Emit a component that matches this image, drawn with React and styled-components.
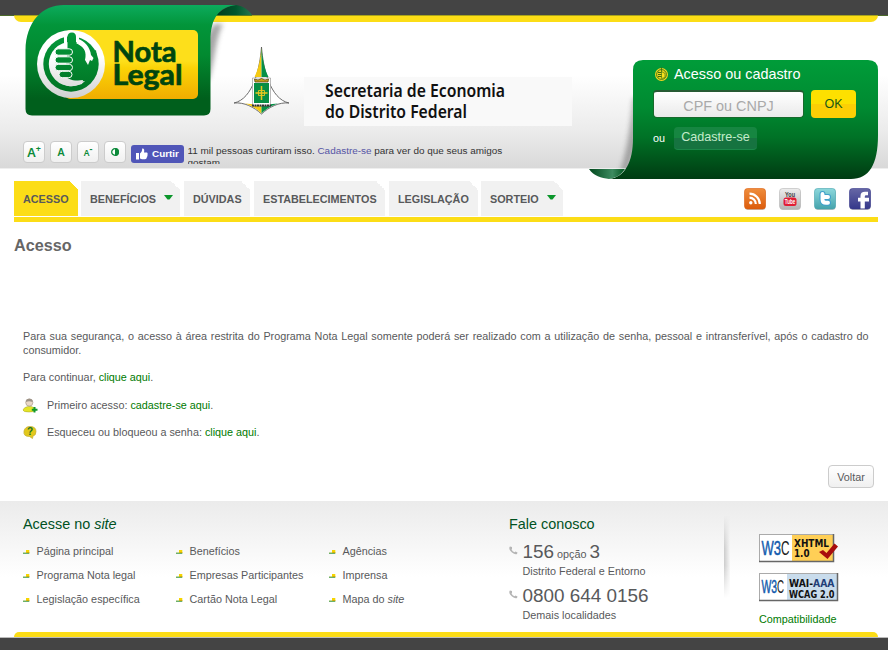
import React from "react";
import styled, { createGlobalStyle } from "styled-components";

const GlobalStyle = createGlobalStyle`
  * { box-sizing: border-box; }
  body {
    margin: 0;
    background: #fff;
    color: #58595b;
    font: 10.8px/14px "Liberation Sans", Arial, sans-serif;
  }
  a { color: #007a00; text-decoration: none; }
  h1, h2, p, ul { margin: 0; padding: 0; font-weight: normal; }
  ul { list-style: none; }
  svg { display: block; flex: none; overflow: visible; }
`;

const Page = styled.div`
  width: 888px;
  height: 650px;
  overflow: hidden;
  display: flex;
  flex-direction: column;
`;

const Header = styled.header`
  position: relative;
  z-index: 1;
  height: 169px;
  flex: none;
  display: flex;
  background: linear-gradient(#444 0 15px, #4c6a2b 15px 16px, #fff 16px 75px, #ececec 129px, #d9d9d9 168px, #eee 168px);
  &::before {
    content: "";
    position: absolute;
    left: 14px;
    right: 10px;
    top: 15px;
    height: 6px;
    border-top: 1px solid #a9a31a;
    border-radius: 0 0 7px 7px;
    background: #fcdd17;
  }
`;

const HeaderLeft = styled.div`
  position: relative;
  width: 589px;
  display: flex;
  flex-direction: column;
`;

const BrandRow = styled.div`
  height: 141px;
  display: flex;
  align-items: flex-start;
  padding: 5px 0 0 25px;
`;

const Emblem = styled.svg`
  margin: 41px 0 0 -19px;
`;

const Secretariat = styled.div`
  margin: 72px 0 0 14px;
  width: 268px;
  height: 49px;
  background: #f9f9f9;
`;

const Tools = styled.div`
  display: flex;
  align-items: flex-start;
  padding-left: 23px;
`;

const ToolButton = styled.button`
  width: 22px;
  height: 22px;
  margin-right: 5px;
  padding: 0;
  display: flex;
  align-items: center;
  justify-content: center;
  border: 1px solid #ccc;
  border-radius: 4px;
  background: linear-gradient(#fff, #f0f0f0);
  color: #0c8a3a;
  font: 600 ${(p) => p.$size || 11}px "Noto Sans", "Open Sans", sans-serif;
  sup { font-size: 9px; font-weight: 700; line-height: 8px; margin-top: -7px; }
`;

const LikeButton = styled.div`
  display: flex;
  align-items: center;
  gap: 4px;
  width: 53px;
  height: 18px;
  margin: 4px 0 0 0;
  padding-left: 5px;
  border-radius: 3px;
  background: #5056b8;
  color: #fff;
  font-size: 9.9px;
  font-weight: bold;
`;

const LikeText = styled.p`
  width: 330px;
  height: 19px;
  margin: 4px 0 0 3.500px;
  overflow: hidden;
  color: #333;
  font-size: 9.93px;
  line-height: 12px;
  a { color: #5555a5; }
`;

const LoginPanel = styled.section`
  position: relative;
  width: 289px;
  height: 119px;
  margin-top: 60px;
  padding: 6px 0 0 64px;
  display: flex;
  flex-direction: column;
`;

const PanelShape = styled.svg`
  position: absolute;
  left: 0;
  top: 0;
  z-index: -1;
`;

const LoginTitle = styled.h2`
  display: flex;
  align-items: center;
  gap: 5px;
  height: 16px;
  margin-left: 1px;
  color: #fff;
  font-size: 14.4px;
`;

const LoginRow = styled.div`
  display: flex;
  align-items: flex-start;
  margin-top: ${(p) => p.$top}px;
  color: #fff;
`;

const DocInput = styled.input`
  width: 151px;
  height: 28px;
  padding: 2px 0 0;
  border: 1px solid #176a2c;
  border-top: 2px solid #275b34;
  border-radius: 4px;
  outline: none;
  background: linear-gradient(#fff, #eaeaea);
  text-align: center;
  font: 14.4px "Liberation Sans", sans-serif;
  &::placeholder { color: #a9a9a9; opacity: 1; }
`;

const OkButton = styled.button`
  width: 45px;
  height: 28px;
  margin-left: 7px;
  padding: 0;
  border: 0;
  border-radius: 4px;
  background: linear-gradient(#fde000 50%, #fccf05 50%);
  color: #165816;
  font: 12.5px "Liberation Sans", sans-serif;
`;

const OrLabel = styled.span`
  width: 21px;
  margin-top: 4px;
`;

const RegisterLink = styled.a`
  width: 83px;
  height: 23px;
  border-radius: 4px;
  border-bottom: 1px solid #1b8849;
  background: linear-gradient(#168641 50%, #167340 50%);
  color: #c4eccb;
  font-size: 12.6px;
  line-height: 20px;
  text-align: center;
`;

const NavBar = styled.nav`
  flex: none;
  display: flex;
  align-items: flex-start;
  justify-content: space-between;
  height: 53px;
  margin: 0 10px 0 14px;
  padding-top: 12px;
  border-bottom: 5px solid #fcdd17;
`;

const Tabs = styled.ul`
  display: flex;
`;

const Tab = styled.li`
  width: ${(p) => p.$w}px;
  height: 35px;
  margin-right: ${(p) => p.$gap}px;
  padding: 0 7.500px 0 9px;
  display: flex;
  align-items: center;
  justify-content: space-between;
  background:
    linear-gradient(to top right, transparent 50%, #fff 50%) top right / 9px 9px no-repeat,
    ${(p) => (p.$active ? "#fcdd17" : "#f1f1f1")};
  color: #58595b;
  font-weight: bold;
  white-space: nowrap;
`;

const Caret = styled.svg`
  margin-top: -2px;
`;

const Social = styled.div`
  display: flex;
  gap: 13px;
  margin: 7px 7px 0 0;
`;

const Main = styled.main`
  flex: none;
  height: 279px;
  padding: 14px 14px 0;
  display: flex;
  flex-direction: column;
`;

const Title = styled.h1`
  height: 93px;
  color: #666;
  font-size: 16.2px;
  line-height: 19px;
  font-weight: bold;
`;

const Body = styled.div`
  width: 845.500px;
  margin-left: 9px;
`;

const Paragraph = styled.p`
  margin-bottom: 13px;
  text-align: justify;
`;

const IconLine = styled.p`
  display: flex;
  align-items: center;
  gap: 9px;
  height: 14px;
  margin: ${(p) => p.$top}px 0 13px;
`;

const BackButton = styled.button`
  align-self: flex-end;
  width: 46px;
  height: 23px;
  margin: 13px 0 0;
  padding: 1px 0 0;
  border: 1px solid #ccc;
  border-radius: 4px;
  background: linear-gradient(#fff, #f0f0f0);
  color: #58595b;
  font: 10.8px "Liberation Sans", sans-serif;
`;

const Footer = styled.footer`
  flex: none;
  height: 131px;
  padding: 15px 0 0 23px;
  display: flex;
  align-items: flex-start;
  background: linear-gradient(#ebebeb, #fff 76px);
`;

const FooterTitle = styled.h2`
  color: #00511f;
  font-size: 14.4px;
  line-height: 17px;
`;

const SiteLinks = styled.section`
  width: 486px;
`;

const LinkGrid = styled.ul`
  display: grid;
  grid-template-columns: repeat(3, 153px);
  grid-auto-rows: 24px;
  margin-top: 11px;
`;

const LinkItem = styled.li`
  display: flex;
  align-items: flex-start;
  gap: 6.500px;
  white-space: pre;
  svg { margin-top: 6px; }
`;

const Contact = styled.section`
  width: 215px;
`;

const Phone = styled.div`
  display: flex;
  gap: 4.500px;
  height: 44px;
  margin-top: ${(p) => p.$top || 0}px;
  svg { margin-top: 4px; }
`;

const Number = styled.div`
  height: 22px;
  font-size: 10.8px;
  line-height: 20px;
  big { font-size: 18.9px; }
`;

const Divider = styled.div`
  width: 6px;
  height: 82px;
  background: linear-gradient(#eeeeee, transparent 40%, transparent 60%, #fff), linear-gradient(90deg, #ccc, #f7f7f7);
`;

const Badges = styled.section`
  display: flex;
  flex-direction: column;
  margin: 18px 0 0 29px;
  gap: 11px;
`;

const BottomBar = styled.div`
  flex: none;
  height: 18px;
  padding: 0 10px 0 14px;
  background: linear-gradient(#fff 5px, #bbb 5px 6px, #444 6px);
  &::before {
    content: "";
    display: block;
    height: 5px;
    border-radius: 7px 7px 0 0;
    background: #fcdd17;
  }
`;

function Logo() {
  return (
    <svg width="227" height="111" viewBox="25 5 227 111">
      <defs>
        <filter id="soft" x="-50%" y="-20%" width="200%" height="140%">
          <feGaussianBlur stdDeviation="2.500" />
        </filter>
        <linearGradient id="lg" x1="0" y1="0" x2="0" y2="1">
          <stop offset="0" stopColor="#0cab5d" />
          <stop offset=".18" stopColor="#02953a" />
          <stop offset=".45" stopColor="#028a30" />
          <stop offset=".85" stopColor="#005f1c" />
        </linearGradient>
        <linearGradient id="ly" x1="0" y1="0" x2="0" y2="1">
          <stop offset=".45" stopColor="#fddf1b" />
          <stop offset=".55" stopColor="#fbd307" />
          <stop offset="1" stopColor="#f0ad00" />
        </linearGradient>
        <linearGradient id="lw" x1="0" y1="30" x2="0" y2="98" gradientUnits="userSpaceOnUse">
          <stop offset=".4" stopColor="#fff" />
          <stop offset="1" stopColor="#d0d0d0" />
        </linearGradient>
        <linearGradient id="lh" x1="0" y1="32" x2="0" y2="92" gradientUnits="userSpaceOnUse">
          <stop offset="0" stopColor="#059a3c" />
          <stop offset="1" stopColor="#007424" />
        </linearGradient>
        <linearGradient id="lc" x1="0" y1="0" x2="1" y2="0">
          <stop offset="0" stopColor="#003c1c" />
          <stop offset=".55" stopColor="#00562d" />
          <stop offset="1" stopColor="#25764f" />
        </linearGradient>
      </defs>
      <path d="M205 80V38L214 24H223C216 36 215 60 209 80Z" fill="#777" opacity=".65" filter="url(#soft)" />
      <path d="M216 15C224 8 231 5 236 5C243 6 249 10 252 15Z" fill="url(#lc)" />
      <path d="M214 15H252V16H214Z" fill="#5c7d20" />
      <path d="M25.5 109V50C26 22 42 5 64 5H236C219 7 210.500 18 210.500 41V109Q210.500 115.500 204 115.500H32Q25.500 115.500 25.500 109Z" fill="url(#lg)" />
      <rect x="65" y="30" width="133" height="69" rx="5" fill="url(#ly)" />
      <circle cx="71" cy="64" r="34" fill="url(#lw)" />
      <circle cx="71" cy="64" r="27.700" fill="url(#lh)" />
      <circle cx="71" cy="64" r="22.200" fill="url(#lw)" />
      <path d="M64 34H67V50H64ZM76 33H79V42H76Z" fill="url(#lw)" />
      <path d="M67.500 50V37Q67.500 32.500 72 32.500Q76 32.500 76 37V43C82 46 86 50 87 55L96 50C100 71 90 90 72 91C78 88 84 86 85 81C74 82 68 79 65 76Z" fill="url(#lh)" />
      <path d="M77 38.500C85 41 90 47 91 55L93.500 58L92 61L90 60L88 65L85 60C87 52 84 46 77 43Z" fill="url(#lw)" />
      {[52, 60, 67.500, 74.500].map((y, i) => (
        <rect key={y} x={55 + (i === 3 ? 4 : 0)} y={y - 3.200} width={i === 3 ? 13 : 17.500} height="6.400" rx="3.200" fill="url(#lh)" stroke="#fff" strokeWidth="1" />
      ))}
      <path d="M53 71C59 80 68 82 83 80L82 84C77 85 74 87 68 86C60 84 54 79 53 71Z" fill="url(#lw)" />
      <g fill="#00450f" stroke="#00450f" strokeWidth=".7" fontFamily="Lato, Open Sans, sans-serif" fontWeight="bold" fontSize="28">
        <text x="112.500" y="61.500" textLength="64" lengthAdjust="spacingAndGlyphs">Nota</text>
        <text x="112.500" y="85" textLength="70" lengthAdjust="spacingAndGlyphs">Legal</text>
      </g>
    </svg>
  );
}

function DistrictEmblem() {
  return (
    <Emblem width="57" height="70" viewBox="233 46 57 70">
      <path d="M261.500 47C260 68 253 99 234 103C244 102 254 107 261.500 114C269 107 279 102 289 103C270 99 263 68 261.500 47Z" fill="#fff" stroke="#5c5c5c" strokeWidth=".9" />
      <path d="M261.500 48C260 62 258 70 254.500 77H261.500ZM245 103.500L261.500 105V113.500C256 108 251 105.500 245 103.500Z" fill="#f5ca13" />
      <path d="M261.500 48C263 62 265 70 268.500 77H261.500ZM278 103.500L261.500 105V113.500C267 108 272 105.500 278 103.500Z" fill="#079047" />
      <path d="M252.500 78H270.500V106H252.500Z" fill="#fff" stroke="#777" strokeWidth=".5" />
      <path d="M255 82L254.500 79L258 80L261.500 78.500L265 80L268.500 79L268 82Z" fill="#c69d1b" stroke="#594813" strokeWidth=".8" />
      <path d="M254 83H269V103H254Z" fill="#078e44" />
      <path d="M261.500 86V100M255.500 93H267.500" stroke="#e9c81e" strokeWidth="1.500" />
      <path d="M258.500 90.500H264.500V95.500H258.500Z" fill="none" stroke="#e9c81e" strokeWidth=".9" />
      <path d="M252 105.500H271" stroke="#333" strokeWidth="2" strokeDasharray="2 .5" />
    </Emblem>
  );
}

function SocialIcon({ kind }) {
  const fill = { rss: ["#ef8d3c", "#dc5c0c"], you: ["#ededed", "#b5b5b5"], twitter: ["#8cd8dc", "#45a3ac"], face: ["#6667a5", "#35388a"] }[kind];
  return (
    <svg width="22" height="22" viewBox="0 0 22 22">
      <defs>
        <linearGradient id={"s" + kind} x1="0" y1="0" x2="0" y2="1">
          <stop offset="0" stopColor={fill[0]} />
          <stop offset="1" stopColor={fill[1]} />
        </linearGradient>
      </defs>
      <rect x="1" y="1" width="20.500" height="21" rx="3" fill="#888" opacity=".5" />
      <rect x=".5" y=".5" width="21" height="20.500" rx="3" fill={`url(#s${kind})`} stroke={fill[1]} strokeWidth=".6" />
      {kind === "rss" && (
        <g fill="none" stroke="#fff" strokeWidth="2.200">
          <circle cx="6.800" cy="14.800" r="1.700" fill="#fff" stroke="none" />
          <path d="M5.500 9.700A6.300 6.300 0 0 1 11.800 16M5.500 5.700A10.300 10.300 0 0 1 15.800 16" />
        </g>
      )}
      {kind === "you" && (
        <g fontFamily="Liberation Sans, sans-serif" fontWeight="bold" textAnchor="middle">
          <text x="11" y="8.800" fontSize="7.500" fill="#444" textLength="10" lengthAdjust="spacingAndGlyphs">You</text>
          <rect x="4.500" y="9.500" width="13" height="8.500" rx="2.500" fill="#e11d35" />
          <text x="11" y="16.200" fontSize="7" fill="#fff" textLength="10.500" lengthAdjust="spacingAndGlyphs">Tube</text>
        </g>
      )}
      {kind === "twitter" && (
        <path d="M8.500 6V11.500Q8.500 14.800 12 14.800H14M8.500 9H14" fill="none" stroke="#3f9fca" strokeWidth="6" strokeLinecap="round" strokeLinejoin="round" />
      )}
      {kind === "twitter" && (
        <path d="M8.500 6V11.500Q8.500 14.800 12 14.800H14M8.500 9H14" fill="none" stroke="#fff" strokeWidth="3.900" strokeLinecap="round" />
      )}
      {kind === "face" && (
        <path d="M11.500 20.500V13.500H9V9.700H11.500V8Q11.500 3.800 16 3.800H19V7.300H17Q15.800 7.300 15.800 8.500V9.700H20V13.500H15.800V20.500Z" fill="#fff" />
      )}
    </svg>
  );
}

function Bullet() {
  return (
    <svg width="7" height="6" viewBox="0 0 7 6">
      <path d="M3 0H6.300V3H3Z" fill="#f6d500" />
      <path d="M0 2H3V3H0Z" fill="#d5e0b0" />
      <path d="M0 2.800H6.300V4H0Z" fill="#6bb06c" />
      <path d="M3.500 2H6.300V3H3.500Z" fill="#cfa90c" />
    </svg>
  );
}

function PhoneIcon() {
  return (
    <svg width="9" height="9" viewBox="0 0 9 9">
      <path d="M1 .5L3 1L3 3L2.500 3.500Q3.500 5.500 5.500 6.200L6.500 5.500L8.500 6.500L8 8Q6 9 3 6.500Q-.5 3.500 .5 1Z" fill="#b5b5b5" />
    </svg>
  );
}

function W3Badge({ wcag }) {
  const w = wcag ? 79 : 75;
  return (
    <svg width={w} height="28" viewBox={`0 0 ${w} 28`}>
      <rect x=".5" y=".5" width={w - 1} height="27" fill={wcag ? "#c9dcec" : "#ffcf56"} stroke="#aaa" />
      <path d={`M1 1H${wcag ? 28 : 33}V27H1Z`} fill="#fff" />
      <path d={`M0 27.500H${w - 0.5}V0`} fill="none" stroke="#666" strokeWidth="1.500" />
      <g fontFamily="Liberation Sans, sans-serif" fontSize={wcag ? 17.500 : 20}>
        <text x="2.500" y={wcag ? 20 : 20.500} fill="#145cae" stroke="#145cae" strokeWidth=".5" textLength={wcag ? 15.500 : 19.500} lengthAdjust="spacingAndGlyphs">W3</text>
        <text x={wcag ? 18 : 22} y={wcag ? 20 : 20.500} fill="#222" textLength={wcag ? 7 : 8.500} lengthAdjust="spacingAndGlyphs">C</text>
      </g>
      <g fontFamily="DejaVu Sans, sans-serif" fontWeight="bold" fontSize={wcag ? 11.200 : 9.800} fill="#111">
        {wcag ? (
          <>
            <text x="30" y="13.500" textLength="45.500" lengthAdjust="spacingAndGlyphs">WAI-<tspan fill="#1f3e78">AAA</tspan></text>
            <text x="30" y="24.500" textLength="45.500" lengthAdjust="spacingAndGlyphs">WCAG 2.0</text>
          </>
        ) : (
          <>
            <text x="35" y="12.500" textLength="35" lengthAdjust="spacingAndGlyphs">XHTML</text>
            <text x="35" y="22.500" textLength="15.500" lengthAdjust="spacingAndGlyphs">1.0</text>
            <path d="M60 18L64 16L67.500 19L75.500 9.500L79 12.500L68.500 25Z" fill="#a80d0d" />
          </>
        )}
      </g>
    </svg>
  );
}

const tabs = [
  { label: "ACESSO", w: 64, gap: 3, active: true },
  { label: "BENEFÍCIOS", w: 99, gap: 4, menu: true },
  { label: "DÚVIDAS", w: 66, gap: 4 },
  { label: "ESTABELECIMENTOS", w: 131, gap: 4 },
  { label: "LEGISLAÇÃO", w: 89, gap: 3 },
  { label: "SORTEIO", w: 82, gap: 0, menu: true },
];

const links = [
  "Página principal", "Benefícios", "Agências",
  "Programa Nota legal", "Empresas Participantes", "Imprensa",
  "Legislação específica", "Cartão Nota Legal",
];

export default function App() {
  return (
    <Page>
      <GlobalStyle />
      <Header>
        <HeaderLeft>
          <BrandRow>
            <Logo />
            <DistrictEmblem />
            <Secretariat>
              <svg width="268" height="49" fontFamily="Noto Sans, sans-serif" fontWeight="600" fontSize="17.200" fill="#111">
                <text x="21" y="19.500" textLength="180" lengthAdjust="spacingAndGlyphs">Secretaria de Economia</text>
                <text x="21" y="41" textLength="142" lengthAdjust="spacingAndGlyphs">do Distrito Federal</text>
              </svg>
            </Secretariat>
          </BrandRow>
          <Tools>
            <ToolButton $size={12.500}>A<sup>+</sup></ToolButton>
            <ToolButton $size={10.500}>A</ToolButton>
            <ToolButton $size={8.500}>A<sup>-</sup></ToolButton>
            <ToolButton>
              <svg width="8" height="8" viewBox="0 0 8 8">
                <circle cx="4" cy="4" r="3.300" fill="#fff" stroke="#0c8a3a" strokeWidth="1.300" />
                <path d="M4 0A4 4 0 0 1 4 8Z" fill="#0c8a3a" />
              </svg>
            </ToolButton>
            <LikeButton>
              <svg width="12" height="12" viewBox="0 0 12 12" fill="#fff">
                <path d="M0 5H3V11.500H0ZM4 5.500C6 4 6 2.500 6.200 .5C8.500 .3 8.500 2.500 8 4.500H11Q12 5 11.500 6.200Q12 7.200 11.200 7.900Q11.500 9 10.700 9.600Q10.800 11.300 9 11.300H6L4 10.500Z" />
              </svg>
              Curtir
            </LikeButton>
            <LikeText>
              11 mil pessoas curtiram isso. <a href="#cadastro">Cadastre-se</a> para ver do que seus amigos gostam.
            </LikeText>
          </Tools>
        </HeaderLeft>
        <LoginPanel>
          <PanelShape width="289" height="119" viewBox="0 0 289 119">
            <defs>
              <linearGradient id="pg" x1="0" y1="0" x2="0" y2="1">
                <stop offset="0" stopColor="#009c39" />
                <stop offset=".4" stopColor="#008a31" />
                <stop offset=".65" stopColor="#007226" />
                <stop offset="1" stopColor="#003b12" />
              </linearGradient>
              <linearGradient id="pc" x1="0" y1="0" x2="1" y2="0">
                <stop offset="0" stopColor="#00471c" />
                <stop offset=".65" stopColor="#3d8b60" />
                <stop offset="1" stopColor="#00551f" />
              </linearGradient>
              <clipPath id="band">
                <path d="M0 0H60V108.500H0Z" />
              </clipPath>
            </defs>
            <g clipPath="url(#band)">
              <path d="M48 38V85L38 112H31C37 95 42 66 44 38Z" fill="#777" opacity=".6" filter="url(#soft)" />
            </g>
            <path d="M44 10Q44 0 54 0H279Q289 0 289 10V75C289 105 280 119 262 119H20C36 117 44 102 44 78Z" fill="url(#pg)" />
            <path d="M0 109H36C32 115 27 118 20 119C12 118 5 116 0 109Z" fill="url(#pc)" />
          </PanelShape>
          <LoginTitle>
            <svg width="15" height="15" viewBox="0 0 15 15">
              <circle cx="7.500" cy="7.500" r="6.500" fill="#f3d61d" />
              <circle cx="7.500" cy="7.500" r="4.900" fill="none" stroke="#376f14" strokeWidth=".9" />
              <path d="M7.500 0V4.500L11 6.500V10.500L7.500 11.500Z" fill="#f8e11d" stroke="#376f14" strokeWidth=".6" />
              <path d="M4 5.500H7.500M4 7.500H7.500M4 9.500H7.500" stroke="#376f14" strokeWidth="1" />
            </svg>
            Acesso ou cadastro
          </LoginTitle>
          <LoginRow $top={8}>
            <DocInput placeholder="CPF ou CNPJ" />
            <OkButton>OK</OkButton>
          </LoginRow>
          <LoginRow $top={9}>
            <OrLabel>ou</OrLabel>
            <RegisterLink href="#cadastro">Cadastre-se</RegisterLink>
          </LoginRow>
        </LoginPanel>
      </Header>
      <NavBar>
        <Tabs>
          {tabs.map((t) => (
            <Tab key={t.label} $w={t.w} $gap={t.gap} $active={t.active}>
              {t.label}
              {t.menu && (
                <Caret width="9" height="5" viewBox="0 0 9 5">
                  <path d="M0 0H9L5.500 4.500H3.500Z" fill="#0b962b" />
                </Caret>
              )}
            </Tab>
          ))}
        </Tabs>
        <Social>
          {["rss", "you", "twitter", "face"].map((k) => <SocialIcon key={k} kind={k} />)}
        </Social>
      </NavBar>
      <Main>
        <Title>Acesso</Title>
        <Body>
          <Paragraph>
            Para sua segurança, o acesso à área restrita do Programa Nota Legal somente poderá ser realizado com a utilização de senha, pessoal e intransferível, após o cadastro do consumidor.
          </Paragraph>
          <Paragraph>Para continuar, <a href="#continuar">clique aqui</a>.</Paragraph>
          <IconLine $top={14}>
            <svg width="15" height="15" viewBox="0 0 15 15">
              <path d="M0 12Q1 9 5 8.500H8Q12 9 12 12Q12 14 6 14Q0 14 0 12Z" fill="#e5e526" stroke="#a5a32c" strokeWidth=".5" />
              <circle cx="6.300" cy="4.500" r="3.600" fill="#ead8c6" stroke="#a99b8d" strokeWidth=".7" />
              <path d="M3 4Q3 .5 6.500 .7Q10 1 9.500 4Q6 2.500 3 4Z" fill="#9d9387" />
              <path d="M11.500 9V14.500M8.800 11.700H14.500" stroke="#10972b" strokeWidth="2" />
            </svg>
            <span>Primeiro acesso: <a href="#cadastro">cadastre-se aqui</a>.</span>
          </IconLine>
          <IconLine $top={13}>
            <svg width="15" height="14" viewBox="0 0 15 14">
              <path d="M1 6Q2 1.500 7 1.500Q13 1.500 13 6.500Q13 10.500 10 11L9.500 13.500L6.500 11.500Q0 11.500 1 6Z" fill="#e2c81b" stroke="#c1ae35" strokeWidth=".7" />
              <text x="4" y="10" fontFamily="Liberation Sans, sans-serif" fontWeight="bold" fontSize="10" fill="#137229">?</text>
            </svg>
            <span>Esqueceu ou bloqueou a senha: <a href="#senha">clique aqui</a>.</span>
          </IconLine>
        </Body>
        <BackButton>Voltar</BackButton>
      </Main>
      <Footer>
        <SiteLinks>
          <FooterTitle>Acesse no <i>site</i></FooterTitle>
          <LinkGrid>
            {links.map((l) => <LinkItem key={l}><Bullet />{l}</LinkItem>)}
            <LinkItem><Bullet /><span>Mapa do <i>site</i></span></LinkItem>
          </LinkGrid>
        </SiteLinks>
        <Contact>
          <FooterTitle>Fale conosco</FooterTitle>
          <Phone $top={9}>
            <PhoneIcon />
            <div>
              <Number><big>156</big> opção <big>3</big></Number>
              Distrito Federal e Entorno
            </div>
          </Phone>
          <Phone>
            <PhoneIcon />
            <div>
              <Number><big>0800 644 0156</big></Number>
              Demais localidades
            </div>
          </Phone>
        </Contact>
        <Divider />
        <Badges>
          <W3Badge />
          <W3Badge wcag />
          <a href="#compatibilidade">Compatibilidade</a>
        </Badges>
      </Footer>
      <BottomBar />
    </Page>
  );
}
